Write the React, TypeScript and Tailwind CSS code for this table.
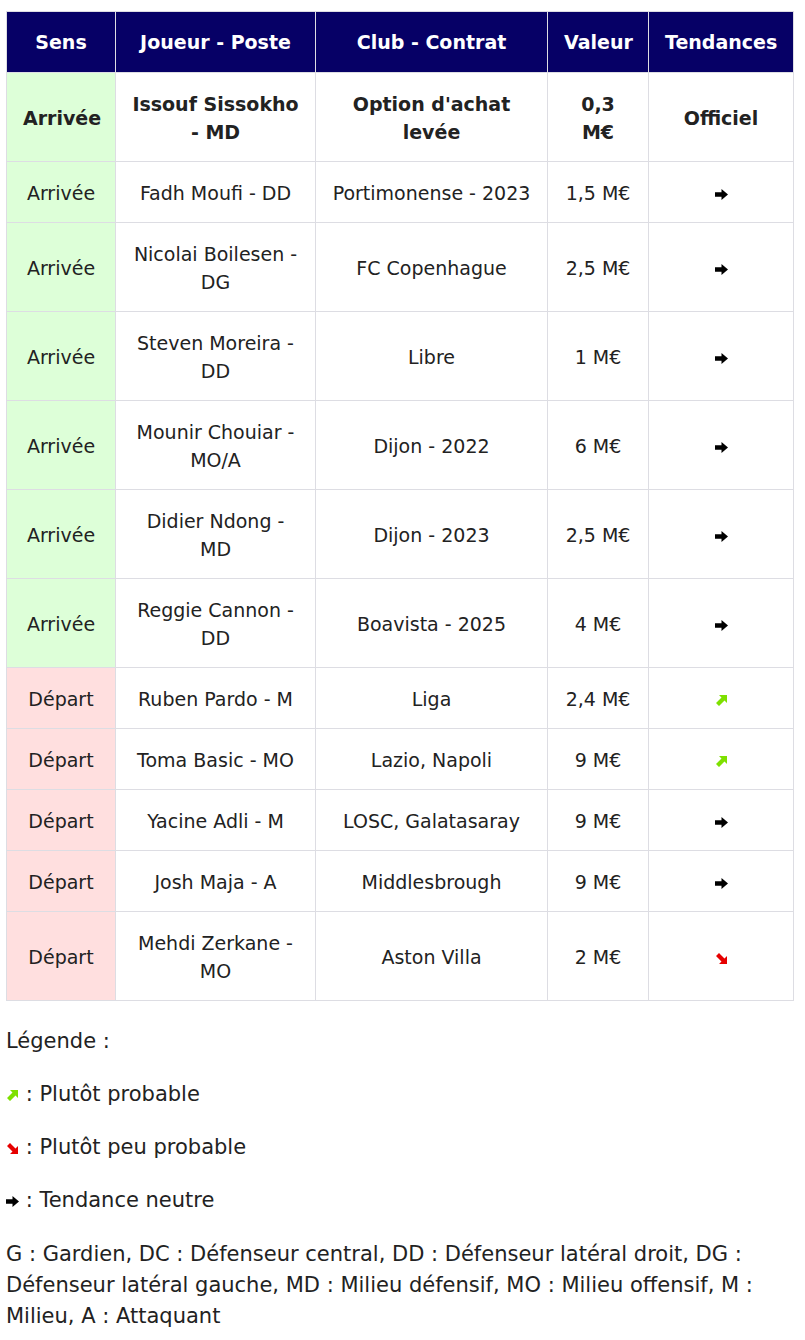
type Trend = "up" | "down" | "flat" | "official";

type Row = {
  sens: "Arrivée" | "Départ";
  joueur: string;
  club: string;
  valeur: string;
  trend: Trend;
  bold?: boolean;
};

const ROWS: Row[] = [
  { sens: "Arrivée", joueur: "Issouf Sissokho - MD", club: "Option d'achat levée", valeur: "0,3 M€", trend: "official", bold: true },
  { sens: "Arrivée", joueur: "Fadh Moufi - DD", club: "Portimonense - 2023", valeur: "1,5 M€", trend: "flat" },
  { sens: "Arrivée", joueur: "Nicolai Boilesen - DG", club: "FC Copenhague", valeur: "2,5 M€", trend: "flat" },
  { sens: "Arrivée", joueur: "Steven Moreira - DD", club: "Libre", valeur: "1 M€", trend: "flat" },
  { sens: "Arrivée", joueur: "Mounir Chouiar - MO/A", club: "Dijon - 2022", valeur: "6 M€", trend: "flat" },
  { sens: "Arrivée", joueur: "Didier Ndong - MD", club: "Dijon - 2023", valeur: "2,5 M€", trend: "flat" },
  { sens: "Arrivée", joueur: "Reggie Cannon - DD", club: "Boavista - 2025", valeur: "4 M€", trend: "flat" },
  { sens: "Départ", joueur: "Ruben Pardo - M", club: "Liga", valeur: "2,4 M€", trend: "up" },
  { sens: "Départ", joueur: "Toma Basic - MO", club: "Lazio, Napoli", valeur: "9 M€", trend: "up" },
  { sens: "Départ", joueur: "Yacine Adli - M", club: "LOSC, Galatasaray", valeur: "9 M€", trend: "flat" },
  { sens: "Départ", joueur: "Josh Maja - A", club: "Middlesbrough", valeur: "9 M€", trend: "flat" },
  { sens: "Départ", joueur: "Mehdi Zerkane - MO", club: "Aston Villa", valeur: "2 M€", trend: "down" },
];

function TrendIcon({ trend }: { trend: Trend }) {
  if (trend === "up") {
    return (
      <svg width="13" height="13" viewBox="0 0 13 13" className="inline-block align-middle">
        <polygon points="4,1 12,1 12,9 9.5,6.5 4,12 1,9 6.5,3.5" fill="#7ee000" />
      </svg>
    );
  }
  if (trend === "down") {
    return (
      <svg width="13" height="13" viewBox="0 0 13 13" className="inline-block align-middle">
        <polygon points="4,12 12,12 12,4 9.5,6.5 4,1 1,4 6.5,9.5" fill="#e60000" />
      </svg>
    );
  }
  return (
    <svg width="13" height="11" viewBox="0 0 13 11" className="inline-block align-middle">
      <polygon points="0,3.2 6.5,3.2 6.5,0 13,5.5 6.5,11 6.5,7.8 0,7.8" fill="#000" />
    </svg>
  );
}

const th = "border border-[#dddde3] px-4 pt-[16px] pb-[16px] font-bold";
const td = "border border-[#dddde3] px-4 pt-[17px] pb-[15px]";

export default function App() {
  return (
    <div
      className="bg-white pl-[6px] pr-[12px] pt-[11px] pb-4 text-[#222]"
      style={{ fontFamily: '"DejaVu Sans", Verdana, sans-serif' }}
    >
      <table className="w-[787px] table-fixed border-collapse text-center text-[19px] leading-[28px]">
        <colgroup>
          <col className="w-[109px]" />
          <col className="w-[200px]" />
          <col className="w-[232px]" />
          <col className="w-[101px]" />
          <col className="w-[145px]" />
        </colgroup>
        <thead>
          <tr className="bg-[#060066] text-white">
            <th className={th}>Sens</th>
            <th className={th}>Joueur - Poste</th>
            <th className={th}>Club - Contrat</th>
            <th className={th}>Valeur</th>
            <th className={th}>Tendances</th>
          </tr>
        </thead>
        <tbody>
          {ROWS.map((r) => (
            <tr key={r.joueur} className={r.bold ? "font-bold" : ""}>
              <td className={`${td} ${r.sens === "Arrivée" ? "bg-[#ddffd8]" : "bg-[#ffdfdf]"}`}>{r.sens}</td>
              <td className={td}>{r.joueur}</td>
              <td className={td}>{r.club}</td>
              <td className={td}>{r.valeur}</td>
              <td className={td}>
                {r.trend === "official" ? "Officiel" : <TrendIcon trend={r.trend} />}
              </td>
            </tr>
          ))}
        </tbody>
      </table>

      <div className="mt-[25px] flex flex-col gap-[22px] text-[21px] leading-[31px]">
        <p>Légende :</p>
        <p>
          <TrendIcon trend="up" /> : Plutôt probable
        </p>
        <p>
          <TrendIcon trend="down" /> : Plutôt peu probable
        </p>
        <p>
          <TrendIcon trend="flat" /> : Tendance neutre
        </p>
        <p className="mt-[1px]">
          G : Gardien, DC : Défenseur central, DD : Défenseur latéral droit, DG : Défenseur latéral gauche, MD :
          Milieu défensif, MO : Milieu offensif, M : Milieu, A : Attaquant
        </p>
      </div>
    </div>
  );
}
